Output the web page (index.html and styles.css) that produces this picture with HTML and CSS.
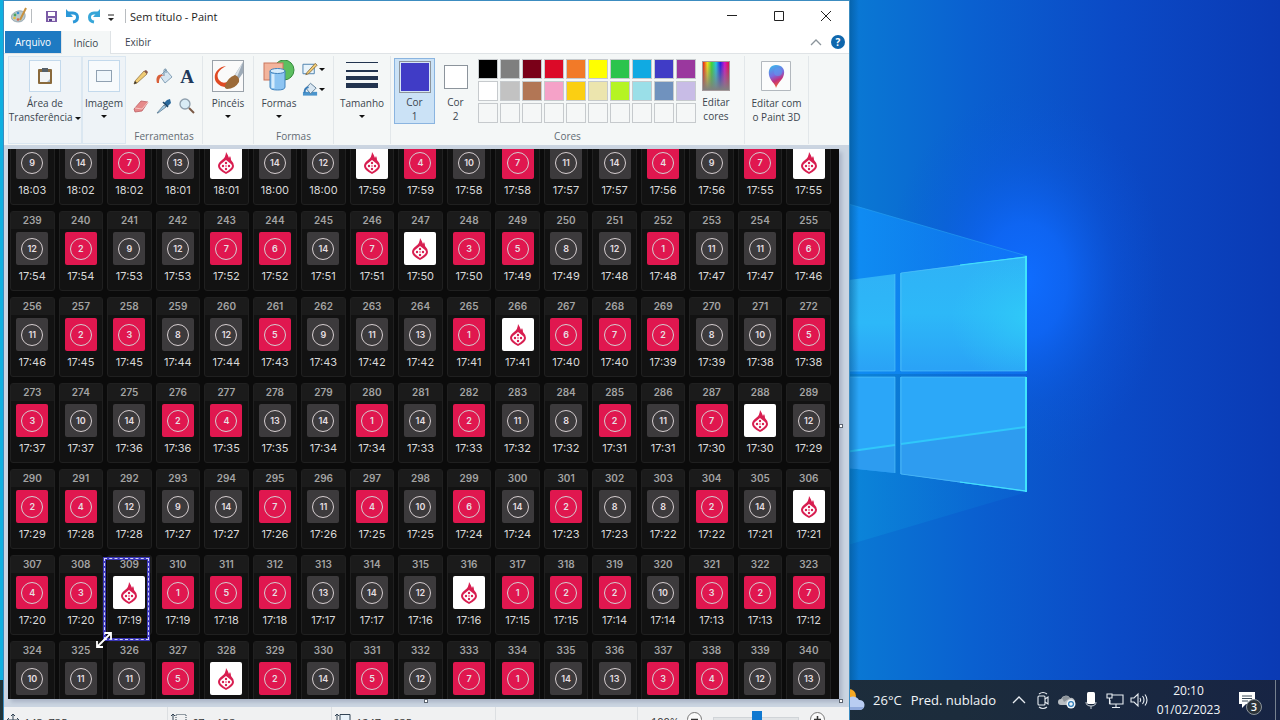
FILE: index.html
```html
<!DOCTYPE html>
<html lang="pt-BR">
<head>
<meta charset="utf-8">
<title>Sem título - Paint</title>
<link rel="stylesheet" href="styles.css">
</head>
<body>
<svg class="wallpaper" viewBox="0 0 1280 720" preserveAspectRatio="xMaxYMid slice" aria-hidden="true">
  <defs>
    <linearGradient id="sky" x1="0" x2="1"><stop offset="0" stop-color="#10b0e0"/><stop offset=".66" stop-color="#0a7ad4"/><stop offset=".76" stop-color="#0a60d0"/><stop offset=".87" stop-color="#0b4ac6"/><stop offset="1" stop-color="#0a3ab4"/></linearGradient>
    <radialGradient id="glow"><stop offset="0" stop-color="#0f6dff"/><stop offset=".3" stop-color="#0f68fb" stop-opacity=".8"/><stop offset=".65" stop-color="#0d5ce8" stop-opacity=".3"/><stop offset="1" stop-color="#0b55d8" stop-opacity="0"/></radialGradient>
    <linearGradient id="beam" x1="0" x2="1"><stop offset="0" stop-color="#1096f8"/><stop offset="1" stop-color="#1080f8" stop-opacity=".5"/></linearGradient>
    <linearGradient id="beam2" x1="0" x2="1"><stop offset="0" stop-color="#0c94dc"/><stop offset="1" stop-color="#0a68d4" stop-opacity=".4"/></linearGradient>
    <linearGradient id="pane" x1="0" y1="0" x2="0" y2="1"><stop offset="0" stop-color="#2fb2f6"/><stop offset=".5" stop-color="#2db8f8"/><stop offset="1" stop-color="#2aa2f6"/></linearGradient>
    <radialGradient id="shine" cx="1" cy=".55" r=".6"><stop offset="0" stop-color="#30d0f8" stop-opacity=".7"/><stop offset="1" stop-color="#30c8f8" stop-opacity="0"/></radialGradient>
    <linearGradient id="edge" x1="0" x2="1"><stop offset="0" stop-color="#004a80" stop-opacity=".5"/><stop offset="1" stop-color="#004a80" stop-opacity="0"/></linearGradient>
  </defs>
  <rect width="1280" height="720" fill="url(#sky)"/>
  <ellipse cx="1025" cy="280" rx="140" ry="190" fill="url(#glow)"/>
  <path d="M780 184 1027 256V374H780z" fill="url(#beam)"/>
  <path d="M780 184 1027 256" stroke="#28a4f4" stroke-opacity=".6" fill="none"/>
  <path d="M780 374H1027V492L780 565z" fill="url(#beam2)"/>
  <path d="M780 289 895 274V371H780z" fill="url(#pane)"/>
  <path d="M900 273 1027 256V371H900z" fill="url(#pane)"/>
  <path d="M900 273 1027 256V371H900z" fill="url(#shine)"/>
  <path d="M780 377H895V473L780 461z" fill="#2ba6f8"/>
  <path d="M900 377H1027V492L900 474z" fill="#2ca8f8"/>
  <path d="M780 461 895 445V473zM900 444 1027 427V492L900 474z" fill="#2f98ee" opacity=".75"/>
  <path d="M780 461 895 445M901 444 1026 427" stroke="#30c8fa" stroke-width="2"/>
  <path d="M895 274V371H780M895 473V377H780M901 371V273L1026 257M901 371H1026M1026 377H901V474L1026 491" stroke="#58c4fa" fill="none" opacity=".6"/>
  <path d="M1026 256V371M1026 377V492" stroke="#40e4fc" stroke-width="2"/>
  <path d="M960 265 1026 257M960 482 1026 491" stroke="#40e4fc" stroke-width="1"/>
  <rect x="849" width="10" height="680" fill="url(#edge)"/>
</svg>

<footer class="taskbar">
  <button class="weather" type="button">
    <svg width="26" height="26" viewBox="0 0 26 26"><circle cx="9" cy="9" r="7" fill="#f6a821"/><path d="M6 23a5 5 0 0 1 1-10 7 7 0 0 1 12 0 5 5 0 0 1 1 10z" fill="#b9cdf2"/><path d="M6 23a5 5 0 0 1-3-3h21a5 5 0 0 1-4 3z" fill="#8fa9dc"/></svg>
    <span>26°C</span><span>Pred. nublado</span>
  </button>
  <div class="tray">
    <button type="button" aria-label="Mostrar ícones ocultos"><svg viewBox="0 0 24 24"><path d="m6 15 6-6 6 6" fill="none" stroke="#e8edf2" stroke-width="1.3"/></svg></button>
    <button type="button" aria-label="Reunião"><svg viewBox="0 0 24 24" fill="none" stroke="#e8edf2" stroke-width="1.1"><rect x="7" y="8" width="7" height="9" rx="1"/><path d="m14 11 3-2v7l-3-2M8 6q4-3 8 0M8 19q4 3 8 0"/></svg></button>
    <button type="button" aria-label="OneDrive"><svg viewBox="0 0 24 24"><path d="M6 17a3 3 0 0 1 0-6 5 5 0 0 1 9-1 4 4 0 0 1 5 4v3z" fill="#b9bec3"/><path d="M7 10a5 5 0 0 1 8 0l-6 4z" fill="#8b9299"/><circle cx="16" cy="16" r="4.5" fill="#eef5fb"/><circle cx="16" cy="16" r="2.4" fill="none" stroke="#2a7ab8" stroke-width="1.2"/></svg></button>
    <button type="button" aria-label="Microfone"><svg viewBox="0 0 24 24"><rect x="8" y="4" width="8" height="12" rx="1.5" fill="#fff"/><path d="M7 14q0 4 5 4t5-4M12 18v3" fill="none" stroke="#cfd6dc"/></svg></button>
    <button type="button" aria-label="Rede"><svg viewBox="0 0 24 24" fill="none" stroke="#e8edf2" stroke-width="1.1"><path d="M9 7h11v9H7v-4M13 16v3M9 19.500h8M4 6h5v4H4zM6.500 10v6"/></svg></button>
    <button type="button" aria-label="Volume"><svg viewBox="0 0 24 24" fill="none" stroke="#e8edf2" stroke-width="1.1"><path d="M4 10h3l4-4v12l-4-4H4zM13 10q1.500 2 0 4M15.500 8q3 4 0 8M18 6.500q4 5.500 0 11"/></svg></button>
  </div>
  <time class="clock" datetime="2023-02-01T20:10"><span>20:10</span><span>01/02/2023</span></time>
  <button class="notes" type="button" aria-label="3 notificações">
    <svg width="20" height="20" viewBox="0 0 20 20"><path d="M2 2h16v12H9l-4 4v-4H2z" fill="#fff"/><path d="M5 6h10M5 8.500h10M5 11h6" stroke="#3a4a58"/></svg>
    <span class="badge">3</span>
  </button>
</footer>

<main class="window">
  <header class="titlebar">
    <svg class="app-icon" width="18" height="18" viewBox="0 0 18 18"><path d="M8 4c5-1 8 2 7 6-1 5-7 6-11 4-4-2-4-8 4-10z" fill="#b8c8cc" stroke="#8195a0" stroke-width=".7"/><circle cx="5" cy="8" r="1.400" fill="#4aa564"/><circle cx="8" cy="6" r="1.300" fill="#3e90d0"/><circle cx="4.500" cy="11" r="1.300" fill="#e3c13c"/><circle cx="8" cy="12.500" r="1.300" fill="#d4654c"/><path d="M16 1 10 13" stroke="#c6903e" stroke-width="2"/></svg>
    <span class="bar"></span>
    <button type="button" aria-label="Salvar"><svg viewBox="0 0 18 18"><path d="M3 4h11v11H3z" fill="#7b5ba6"/><path d="M5 5h7v4H5z" fill="#fff"/><path d="M5 11h7v3H5z" fill="#e6dff0"/><path d="M6 12h3v2H6z" fill="#57408a"/></svg></button>
    <button type="button" aria-label="Desfazer"><svg viewBox="0 0 18 18"><path d="M4 6h5c6 0 6 8 0 9" fill="none" stroke="#2b98d8" stroke-width="3"/><path d="m2 2v8l7 0z" fill="#2b98d8"/></svg></button>
    <button type="button" aria-label="Refazer"><svg viewBox="0 0 18 18"><path d="M13 6H9c-6 0-6 8 0 9" fill="none" stroke="#37a6d8" stroke-width="3"/><path d="m15 2v8l-7 0z" fill="#37a6d8"/></svg></button>
    <button class="small" type="button" aria-label="Personalizar"><svg viewBox="0 0 18 18"><path d="M6 8h6" stroke="#222"/><path d="M6 11h6l-3 3z" fill="#222"/></svg></button>
    <span class="bar"></span>
    <h1>Sem título - Paint</h1>
    <div class="controls">
      <button type="button" aria-label="Minimizar"><svg viewBox="0 0 12 12"><path d="M1 5.500h10" stroke="#222"/></svg></button>
      <button type="button" aria-label="Maximizar"><svg viewBox="0 0 12 12"><path d="M1.500 1.500h9v9h-9z" fill="none" stroke="#222"/></svg></button>
      <button type="button" aria-label="Fechar"><svg viewBox="0 0 12 12"><path d="m1 1 10 10M11 1 1 11" stroke="#222"/></svg></button>
    </div>
  </header>

  <nav class="tabs">
    <button class="file" type="button">Arquivo</button>
    <button class="active" type="button">Início</button>
    <button type="button">Exibir</button>
    <span class="spacer"></span>
    <button class="fold" type="button" aria-label="Minimizar faixa"><svg width="12" height="8" viewBox="0 0 12 8"><path d="m1 7 5-5 5 5" fill="none" stroke="#8b949b" stroke-width="1.300"/></svg></button>
    <button class="help" type="button" aria-label="Ajuda">?</button>
  </nav>

  <section class="ribbon">
    <div class="group boxed clip">
      <button class="tool" type="button">
        <span class="framed"><svg width="20" height="20" viewBox="0 0 20 20"><rect x="3" y="3" width="14" height="15" rx="1" fill="#8a6a3c"/><path d="M5 6h10v10H5z" fill="#f2f4f6"/><path d="M7 2h6v4H7z" fill="#566069"/><path d="M12 16h3v-3z" fill="#a8b8c4"/></svg></span>
        <span>Área de<br>Transferência <i class="drop"></i></span>
      </button>
    </div>
    <div class="group boxed image">
      <button class="tool" type="button">
        <span class="framed"><svg width="18" height="16" viewBox="0 0 18 16"><path d="M1.500 2.500h15v11h-15z" fill="#f0f7fc" stroke="#2c4a68" stroke-dasharray="1 1"/></svg></span>
        <span>Imagem</span><i class="drop"></i>
      </button>
    </div>
    <div class="group tools">
      <div class="tool-grid">
        <button type="button" aria-label="Lápis"><svg viewBox="0 0 18 18"><path d="m3 13 9-10 3 3-10 9-3 1z" fill="#f0cc74" stroke="#8a6a38" stroke-width=".7"/><path d="m3 13 2 2-3 1z" fill="#333"/><path d="m12 3 3 3 1-2-2-2z" fill="#8b5a4a"/></svg></button>
        <button type="button" aria-label="Preencher"><svg viewBox="0 0 18 18"><path d="m5 8 6-6 6 7-7 6z" fill="#d6e5f0" stroke="#6f8fa8" stroke-width=".8"/><path d="M9 8V2q0-1 2-1v4" fill="none" stroke="#6f8fa8"/><path d="M2 15c-2-7 2-10 7-8-4 1-5 4-5 8z" fill="#d8603a"/></svg></button>
        <button class="letter" type="button" aria-label="Texto">A</button>
        <button type="button" aria-label="Borracha"><svg viewBox="0 0 18 18"><path d="m2 12 7-8 7 1-6 9-7 1z" fill="#e68a8a" stroke="#bc5f63" stroke-width=".8"/><path d="m3 11 7 1 6-7" fill="none" stroke="#f6c4c0"/></svg></button>
        <button type="button" aria-label="Selecionador de cores"><svg viewBox="0 0 18 18"><path d="m2 16 7-8 2 2-8 6z" fill="#a8d0e8" stroke="#5a7890" stroke-width=".8"/><path d="m9 6 3 4 4-4-1-4-3 1z" fill="#2c6a9c"/><path d="m8 5 5 5" stroke="#1d4566" stroke-width="1.500"/></svg></button>
        <button type="button" aria-label="Lupa"><svg viewBox="0 0 18 18"><circle cx="7" cy="7" r="5" fill="#d9ecf6" stroke="#8fa0ae" stroke-width="1.300"/><path d="m11 11 5 5" stroke="#7a5a46" stroke-width="2"/></svg></button>
      </div>
      <span class="caption">Ferramentas</span>
    </div>
    <div class="group brush">
      <button class="tool" type="button">
        <svg width="32" height="32" viewBox="0 0 32 32"><rect x=".5" y=".5" width="31" height="31" fill="#fafafa" stroke="#9aa2aa"/><path d="M14 6C4 7-1 18 6 24q6 6 14 0l-5-2q-5 2-8-2C3 14 8 9 14 6z" fill="#e04a24"/><path d="M31 2 22 16l4 4 5-7z" fill="#9eabb8"/><path d="M31 2 23 15l2 2z" fill="#dbe2e8"/><path d="M23 15q5 2 4 7-4 7-12 7-3-1-2-3 2-8 10-11z" fill="#9c6a38"/></svg>
        <span>Pincéis</span><i class="drop"></i>
      </button>
    </div>
    <div class="group shapes">
      <div class="shape-row">
        <button class="tool" type="button">
          <svg width="32" height="32" viewBox="0 0 32 32"><circle cx="21" cy="10" r="10" fill="#5cbf60" stroke="#348a3c"/><rect x="1" y="3" width="19" height="17" fill="#f2b49c" stroke="#c9765c"/><path d="M7 11v16q0 3 7.500 3t7.500-3V11z" fill="#8cc4f2" stroke="#4182bc"/><ellipse cx="14.500" cy="11" rx="7.500" ry="2.500" fill="#d6ecfc" stroke="#4182bc"/><path d="M10 14v14" stroke="#d6ecfc" stroke-width="3"/></svg>
          <span>Formas</span><i class="drop"></i>
        </button>
        <div class="mini">
          <button type="button" aria-label="Contorno"><svg width="17" height="16" viewBox="0 0 18 16"><path d="M1 3h12v10H1z" fill="#e8f4fb" stroke="#4a80ac"/><path d="m5 12 9-10 2 2-9 9-3 1z" fill="#f0cc74" stroke="#775a30" stroke-width=".8"/></svg><i class="drop"></i></button>
          <button type="button" aria-label="Preenchimento"><svg width="17" height="16" viewBox="0 0 18 16"><path d="M1 11h15v4H1z" fill="#4a94cc"/><path d="m4 7 5-5 6 5-6 6z" fill="#d9e7f2" stroke="#5c7c96"/><path d="M3 12q-1-5 4-6" fill="none" stroke="#387cb8" stroke-width="2"/></svg><i class="drop"></i></button>
        </div>
      </div>
      <span class="caption">Formas</span>
    </div>
    <div class="group size">
      <button class="tool" type="button">
        <svg width="32" height="32" viewBox="0 0 32 32" fill="#22344f"><path d="M0 2h32v1H0zM0 10h32v2H0zM0 16h32v4H0zM0 23h32v5H0z"/></svg>
        <span>Tamanho</span><i class="drop"></i>
      </button>
    </div>
    <div class="group colors">
      <div class="color-row">
        <button class="pick selected" type="button"><i class="swatch one"></i><span>Cor<br>1</span></button>
        <button class="pick" type="button"><i class="swatch two"></i><span>Cor<br>2</span></button>
        <div class="palette" id="palette"></div>
        <button class="tool edit" type="button"><i class="rainbow"></i><span>Editar<br>cores</span></button>
      </div>
      <span class="caption">Cores</span>
    </div>
    <div class="group paint3d">
      <button class="tool" type="button">
        <svg width="30" height="32" viewBox="0 0 30 32"><defs><linearGradient id="drop3d" x1=".2" y1="0" x2=".5" y2="1"><stop offset="0" stop-color="#38b8ec"/><stop offset=".45" stop-color="#7b6ce0"/><stop offset=".7" stop-color="#c2307c"/><stop offset="1" stop-color="#f06a30"/></linearGradient></defs><path d="M.5 1.500h29v29H.5z" fill="#fbfcfc" stroke="#b2b8be"/><path d="M15 5c6 0 9 4 8 9-1 6-6 8-8 14-1-5-6-7-7-13-1-6 2-10 7-10z" fill="url(#drop3d)"/><circle cx="17" cy="12" r="4" fill="#5a9cf0" opacity=".6"/></svg>
        <span>Editar com<br>o Paint 3D</span>
      </button>
    </div>
  </section>

  <section class="workspace">
    <div class="canvas">
      <div class="viewport"><div class="results" id="results"></div></div>
      <i class="handle right"></i><i class="handle bottom"></i><i class="handle corner"></i>
    </div>
  </section>

  <footer class="status">
    <div class="cell"><svg width="12" height="12" viewBox="0 0 12 12"><path d="M6 0v12M0 6h12M4 2l2-2 2 2M2 4 0 6l2 2M10 4l2 2-2 2" fill="none" stroke="#345"/></svg>143, 735px</div>
    <div class="cell"><svg width="16" height="14" viewBox="0 0 16 14"><path d="M2 14V1M0 3l2-2 2 2" fill="none" stroke="#345"/><path d="M5 13V1.500h10V13" fill="none" stroke="#345" stroke-dasharray="1 1"/></svg>67 × 133px</div>
    <div class="cell"><svg width="16" height="14" viewBox="0 0 16 14"><path d="M2 14V1M0 3l2-2 2 2" fill="none" stroke="#345"/><path d="M5 1.500h10v12H5z" fill="#e8f2fa" stroke="#345"/></svg>1247 × 835px</div>
    <div class="cell"></div>
    <div class="zoom">
      <label for="zoom">100%</label>
      <button type="button" aria-label="Reduzir"><svg width="15" height="15" viewBox="0 0 15 15"><circle cx="7.500" cy="7.500" r="7" fill="#fafafa" stroke="#777"/><path d="M4 7.500h7" stroke="#333" stroke-width="1.500"/></svg></button>
      <input id="zoom" type="range" min="0" max="100" value="52">
      <button type="button" aria-label="Ampliar"><svg width="15" height="15" viewBox="0 0 15 15"><circle cx="7.500" cy="7.500" r="7" fill="#fafafa" stroke="#777"/><path d="M4 7.500h7M7.500 4v7" stroke="#333" stroke-width="1.500"/></svg></button>
    </div>
  </footer>
</main>
<script src="app.js"></script>
</body>
</html>
```
FILE: styles.css
```css
* { box-sizing: border-box; }
body {
  margin: 0;
  height: 100vh;
  overflow: hidden;
  position: relative;
  font-family: "Open Sans", "Noto Sans", sans-serif;
  font-size: 10px;
  color: #3b454e;
  background: #0a50c8;
}
button {
  font: inherit;
  color: inherit;
  background: none;
  border: 0;
  padding: 0;
  margin: 0;
}
svg { display: block; flex: none; }
.wallpaper { position: absolute; inset: 0; width: 100%; height: 100%; }

/* taskbar */
.taskbar {
  position: absolute;
  inset: auto 0 0 0;
  height: 40px;
  display: flex;
  justify-content: flex-end;
  align-items: center;
  padding-right: 4px;
  background: linear-gradient(90deg, #1f3338, #1c2c3c 75%, #172444);
  color: #f2f5f8;
}
.weather { display: flex; align-items: center; gap: 9px; font-size: 13px; margin-right: 11px; }
.weather svg { margin-right: -2px; }
.tray { display: flex; }
.tray svg { width: 24px; height: 24px; }
.clock {
  width: 75px;
  display: flex;
  flex-direction: column;
  text-align: center;
  font-size: 12px;
  line-height: 19px;
}
.notes {
  position: relative;
  width: 50px;
  height: 40px;
  padding-left: 11px;
  border-right: 1px solid #76818f;
}
.badge {
  position: absolute;
  left: 20px;
  top: 19px;
  width: 16px;
  height: 16px;
  border: 1px solid #8d959c;
  border-radius: 8px;
  background: #2b3238;
  font-size: 11px;
  font-weight: 600;
  line-height: 14px;
}

/* application window */
.window {
  position: absolute;
  inset: 1px 431px -14px 4px;
  display: flex;
  flex-direction: column;
  background: #fff;
  box-shadow: 0 0 0 1px #3c8cc0;
}
.titlebar { display: flex; align-items: center; height: 30px; padding-left: 6px; }
.titlebar > button svg { width: 18px; height: 18px; }
.titlebar > button { width: 21px; display: flex; justify-content: center; }
.titlebar > .small { width: 14px; }
.titlebar .app-icon + .bar { margin: 0 9px 0 3px; }
.bar { width: 1px; height: 14px; background: #b8bcc0; margin: 0 4px 0 7px; }
h1 { margin: 0; font-size: 11px; font-weight: 400; color: #1c1c1c; }
.controls { margin-left: auto; display: flex; }
.controls button { width: 47px; height: 30px; display: grid; place-items: center; }
.controls svg { width: 12px; height: 12px; }

.tabs { display: flex; align-items: stretch; height: 23px; padding: 0 4px 0 1px; border-bottom: 1px solid #dfe3e6; }
.tabs button { width: 54px; }
.tabs .file { width: 56px; background: #1e7ac2; color: #fff; }
.tabs .active { width: 50px; background: #f4f7f7; border: 1px solid #dfe3e6; border-width: 0 1px; margin-bottom: -1px; }
.spacer { flex: 1; }
.tabs .fold { width: 12px; margin-right: 9px; }
.tabs .help {
  width: 14px;
  height: 14px;
  align-self: center;
  border-radius: 7px;
  background: #0f67ad;
  color: #fff;
  font-weight: 700;
  line-height: 14px;
}

/* ribbon */
.ribbon { display: flex; height: 91px; padding: 2px 4px 1px 4px; background: #f4f7f7; line-height: 14px; }
.group {
  display: flex;
  flex-direction: column;
  align-items: center;
  justify-content: space-between;
  flex: none;
  border-right: 1px solid #e2e7ea;
  padding-top: 4px;
}
.boxed { background: #eef3f7; border: 1px solid #dbe7f1; }
.clip { width: 74px; }
.image { width: 44px; }
.tools { width: 77px; }
.brush { width: 51px; }
.shapes { width: 80px; }
.size { width: 57px; }
.colors { width: 354px; }
.paint3d { width: 64px; }
.caption { color: #626b73; padding-bottom: 1px; }
.tool { display: flex; flex-direction: column; align-items: center; white-space: nowrap; }
.tool > :first-child { margin-bottom: 4px; }
.framed {
  width: 32px;
  height: 32px;
  display: grid;
  place-items: center;
  border: 1px solid #c3d9ec;
  background: #f7fafc;
}
.boxed .tool { margin-top: -1px; }
.drop {
  display: inline-block;
  border: 3px solid transparent;
  border-top: 3px solid #111;
  border-bottom: 0;
  vertical-align: middle;
}
.tool > .drop { margin-top: 5px; }
.tool-grid { display: grid; grid-template-columns: repeat(3, 18px); gap: 11px 5px; padding-top: 8px; }
.tool-grid button, .tool-grid svg { width: 18px; height: 18px; }
.letter { font: 700 19px/18px "Liberation Serif", serif; color: #20385a; }
.shape-row { display: flex; gap: 6px; }
.mini { display: flex; flex-direction: column; gap: 4px; padding-top: 1px; }
.mini button { display: flex; align-items: center; }
.color-row { display: flex; width: 100%; padding-left: 3px; margin-top: -2px; }
.pick { width: 41px; height: 66px; border: 1px solid transparent; text-align: center; }
.pick span { display: block; }
.selected { background: #cbe2f6; border-color: #8ab4e0; }
.swatch { display: block; margin: 2px auto; border: 1px solid #8c949c; }
.one { width: 32px; height: 32px; background: #403cc6; box-shadow: inset 0 0 0 1px #d6e6f6; }
.two { width: 24px; height: 24px; background: #fff; margin: 6px auto; }
.palette { display: grid; grid-template-columns: repeat(10, 20px); grid-auto-rows: 20px; gap: 2px; padding-top: 1px; margin-left: 2px; }
.color { border: 1px solid #c6cacd; }
.edit { margin: 3px 0 0 6px; }
.rainbow {
  width: 28px;
  height: 30px;
  border: 1px solid #a49a9c;
  background: linear-gradient(transparent, #808080), linear-gradient(90deg, #f01810, #f8e018, #38d838, #20c8e8, #2020e8, #d810c8, #e01040);
}

/* picture area */
.workspace { flex: 1; min-height: 0; display: flex; padding: 4px 10px 8px 4px; background: #cbd5e1; }
.canvas { position: relative; flex: 1; min-width: 0; display: flex; box-shadow: 3px 3px 4px #aab4c6; }
.viewport { flex: 1; overflow: hidden; background: #0b0b0b; }
.results {
  display: grid;
  grid-template-columns: repeat(17, 1fr);
  gap: 6px 4px;
  margin-top: -24px;
  padding: 0 8px 0 2px;
  font-family: Inter, sans-serif;
}
.card {
  position: relative;
  height: 80px;
  display: flex;
  flex-direction: column;
  align-items: center;
  border: 1px solid #202020;
  border-radius: 3px;
  background: #121212;
}
.number {
  align-self: stretch;
  height: 17px;
  margin-bottom: 3px;
  line-height: 17px;
  text-align: center;
  background: #1b1b1b;
  color: #a3a3a3;
  font-size: 10px;
  font-weight: 600;
}
.tile { width: 32px; height: 33px; display: grid; place-items: center; border-radius: 2px; background: #3c3a3c; }
.tile.red { background: #e0174f; }
.tile.white { background: #fff; }
.ring {
  width: 22px;
  height: 22px;
  border: 1px solid #d5cdcf;
  border-radius: 11px;
  color: #e6dfe1;
  font-size: 9px;
  font-weight: 600;
  line-height: 20px;
  text-align: center;
}
.time { font-size: 11px; line-height: 14px; margin-top: 4px; color: #d8d8d8; }
.selection { position: absolute; inset: 1px 1px -7px -5px; border: 3px solid #3a36b8; }
.selection::after { content: ""; position: absolute; inset: -2px; border: 1px dashed #d5d5f4; }
.cursor { position: absolute; left: -13px; top: 74px; z-index: 1; }
.handle { position: absolute; width: 4px; height: 4px; border: 1px solid #5c6470; background: #fff; }
.handle.right { right: -4px; top: 50%; }
.handle.bottom { bottom: -4px; left: 50%; }
.handle.corner { right: -4px; bottom: -4px; }

/* status bar */
.status { display: flex; height: 27px; background: #f0f1f2; color: #333; font-size: 11px; }
.cell { display: flex; align-items: center; gap: 5px; width: 164px; padding: 3px 3px 0; border-right: 1px solid #dcdfe2; }
.cell svg { margin-bottom: 4px; }
.cell:nth-child(4) { width: 142px; }
.zoom { flex: 1; display: flex; align-items: flex-start; justify-content: flex-end; gap: 8px; padding: 5px 24px 0 0; }
.zoom label { line-height: 15px; padding-top: 2px; }
.zoom input { appearance: none; width: 86px; height: 6px; margin: 5px 3px 0; background: #e1e4e6; border: 1px solid #d0d4d8; }
.zoom input::-webkit-slider-thumb { appearance: none; width: 10px; height: 19px; background: #0f78d0; }
```
FILE: app.js
```js
const rolls = [
  9, 14, 7, 13, 0, 14, 12, 0, 4, 10, 7, 11, 14, 4, 9, 7, 0,
  12, 2, 9, 12, 7, 6, 14, 7, 0, 3, 5, 8, 12, 1, 11, 11, 6,
  11, 2, 3, 8, 12, 5, 9, 11, 13, 1, 0, 6, 7, 2, 8, 10, 5,
  3, 10, 14, 2, 4, 13, 14, 1, 14, 2, 11, 8, 2, 11, 7, 0, 12,
  2, 4, 12, 9, 14, 7, 11, 4, 10, 6, 14, 2, 8, 8, 2, 14, 0,
  4, 3, 0, 1, 5, 2, 13, 14, 12, 0, 1, 2, 2, 10, 3, 2, 7,
  10, 11, 11, 5, 0, 2, 14, 5, 12, 7, 1, 14, 13, 3, 4, 12, 13
];
const columns = 17;
const firstNumber = 222;
const selectedNumber = 309;
const flame = '<svg width="18" height="22" viewBox="0 0 18 22"><path d="M9 0q2 3 3 6l1-2q1 2 1 4 3 3 3 6 0 4-8 8-8-4-8-8 0-3 4-6 4-3 4-8z" fill="#d81e50"/><path d="m9 8 5 4q1 1 1 2 0 2-6 6-6-4-6-6 0-1 1-2z" fill="#fff"/><g fill="#d81e50"><circle cx="9" cy="11" r="1.200"/><circle cx="6" cy="14" r="1.200"/><circle cx="12" cy="14" r="1.200"/><circle cx="9" cy="14" r=".8"/><circle cx="9" cy="17" r="1.200"/></g></svg>';
const selection = '<i class="selection"></i><svg class="cursor" width="18" height="20" viewBox="0 0 18 20"><path d="M3 16 15 4M10 3h6v6M2 11v6h6" fill="none" stroke="#fff" stroke-width="1.800"/></svg>';

document.getElementById("results").innerHTML = rolls.map((value, i) => {
  const minutes = 18 * 60 + 3 - Math.ceil(i / 2);
  const hidden = i >= rolls.length - columns;
  const time = hidden ? "" : Math.floor(minutes / 60) + ":" + String(minutes % 60).padStart(2, "0");
  const kind = value === 0 ? "white" : value < 8 ? "red" : "black";
  const face = value === 0 ? flame : `<span class="ring">${value}</span>`;
  const number = firstNumber + i;
  const heading = i < columns ? "" : number;
  return `<div class="card"><span class="number">${heading}</span><span class="tile ${kind}">${face}</span><span class="time">${time}</span>${number === selectedNumber ? selection : ""}</div>`;
}).join("");

const colors = [
  "#000000", "#7f7f7f", "#7a0018", "#dc0a28", "#f27a28", "#ffff00", "#2cc44c", "#10aae2", "#403cc6", "#9a389e",
  "#ffffff", "#c2c2c2", "#b27655", "#f5a2c8", "#fbcf12", "#ece5ae", "#b5f424", "#9adfe8", "#7092be", "#c8bce6"
];
document.getElementById("palette").innerHTML = Array.from({ length: 30 }, (_, i) =>
  `<button class="color" type="button" aria-label="Cor ${i + 1}" style="background:${colors[i] || "#f5f7f7"}"></button>`
).join("");
```
